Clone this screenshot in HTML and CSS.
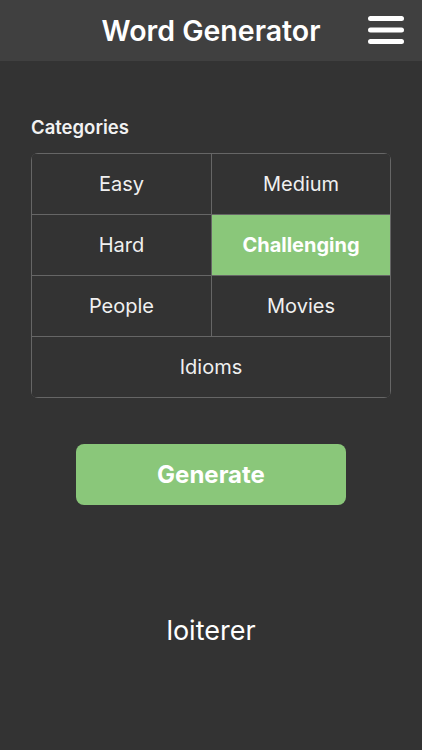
FILE: index.html
```html
<!DOCTYPE html>
<html>
<head>
<meta charset="utf-8">
<link rel="stylesheet" href="styles.css">
</head>
<body>
<header class="topbar">
  <h1 class="title">Word Generator</h1>
  <button class="menu" aria-label="Menu">
    <svg width="36" height="30" viewBox="0 0 36 30">
      <rect x="0" y="1" width="36" height="5" rx="2.5" fill="#fff"/>
      <rect x="0" y="12.5" width="36" height="5" rx="2.5" fill="#fff"/>
      <rect x="0" y="24" width="36" height="5" rx="2.5" fill="#fff"/>
    </svg>
  </button>
</header>
<main class="content">
  <h2 class="label">Categories</h2>
  <div class="grid">
    <div class="cell">Easy</div>
    <div class="cell">Medium</div>
    <div class="cell">Hard</div>
    <div class="cell active">Challenging</div>
    <div class="cell">People</div>
    <div class="cell">Movies</div>
    <div class="cell wide">Idioms</div>
  </div>
  <button class="generate">Generate</button>
  <p class="word">loiterer</p>
</main>
</body>
</html>
```
FILE: styles.css
```css
* { box-sizing: border-box; }
html, body {
  margin: 0;
  padding: 0;
  background: #333333;
  font-family: Inter, "Liberation Sans", sans-serif;
  color: #ffffff;
  height: 100%;
}
.topbar {
  position: relative;
  height: 61px;
  background: #404040;
  display: flex;
  align-items: center;
  justify-content: center;
}
.title {
  margin: 0;
  font-size: 28.5px;
  font-weight: 600;
  letter-spacing: 0;
  padding-right: 0;
}
.menu {
  position: absolute;
  right: 18px;
  top: 15px;
  padding: 0;
  border: 0;
  background: none;
  line-height: 0;
}
.content {
  padding: 0 31px;
  display: flex;
  flex-direction: column;
}
.label {
  margin: 56px 0 15px 0;
  font-size: 18.5px;
  font-weight: 600;
  line-height: 21px;
  color: #f2f2f2;
}
.grid {
  display: grid;
  grid-template-columns: 179px 1fr;
  grid-auto-rows: 60px;
  gap: 1px;
  padding: 1px;
  background: #666666;
  border-radius: 7px;
  overflow: hidden;
  width: 360px;
}
.cell {
  background: #333333;
  display: flex;
  align-items: center;
  justify-content: center;
  font-size: 20px;
  color: #f0f0f0;
}
.cell.wide { grid-column: 1 / span 2; }
.cell.active {
  background: #8ac77a;
  color: #ffffff;
  font-weight: 700;
}
.generate {
  align-self: center;
  margin: 46px 0 0 0;
  width: 270px;
  height: 61px;
  border: 0;
  border-radius: 8px;
  background: #8ac77a;
  color: #ffffff;
  font-family: inherit;
  font-size: 24px;
  font-weight: 700;
}
.word {
  margin: 110px 0 0 0;
  text-align: center;
  font-size: 27px;
  line-height: 32px;
  color: #ffffff;
  padding-left: 0;
}
```
